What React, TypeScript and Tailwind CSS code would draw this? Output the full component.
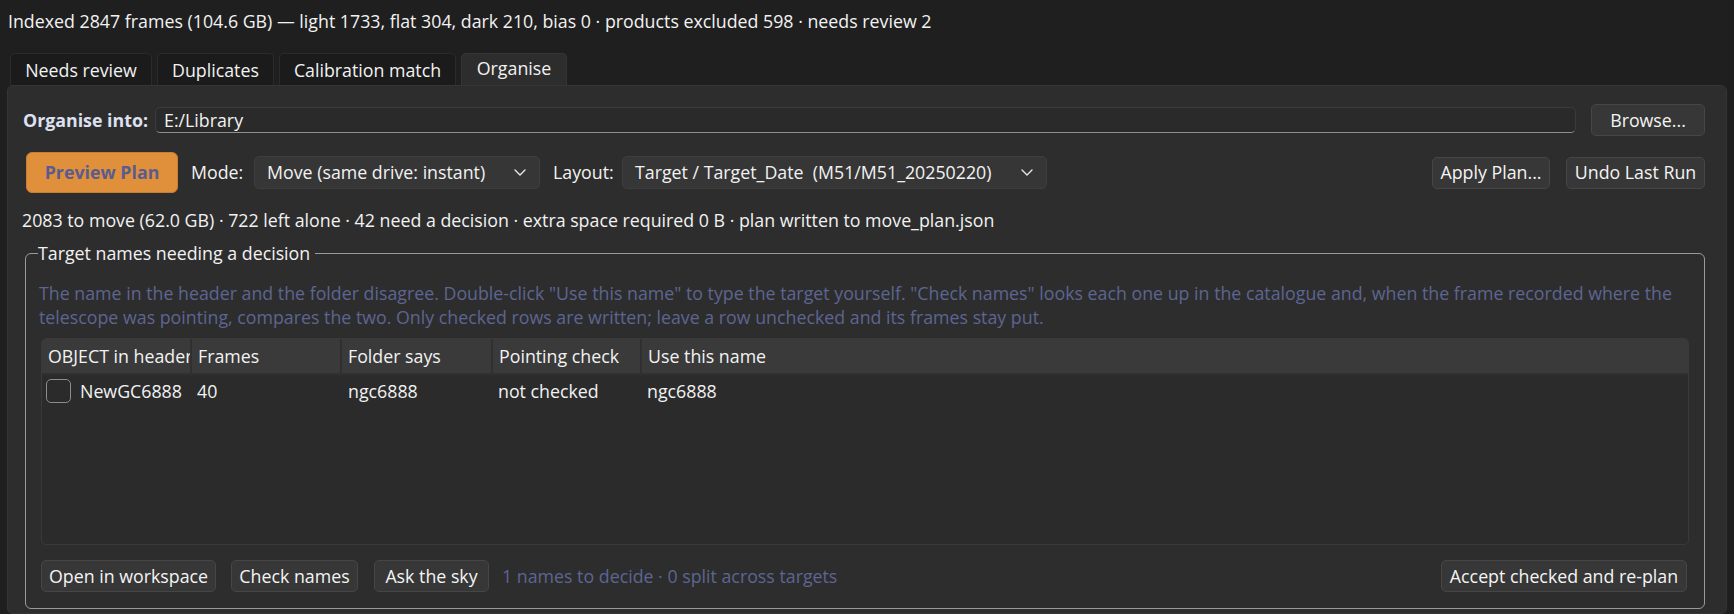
import React from 'react';

// Organise tab of the frame library window
const font = { fontFamily: '"Open Sans", "Noto Sans", sans-serif' };

function Chevron() {
  return (
    <svg width="12" height="7" viewBox="0 0 12 7" fill="none" className="shrink-0">
      <polyline points="1,1 6,6 11,1" stroke="#e8e8e8" strokeWidth="1.4" strokeLinecap="round" strokeLinejoin="round" />
    </svg>
  );
}

function Combo({ text, width }: { text: string; width: string }) {
  return (
    <div
      className={`${width} h-[33px] flex items-center justify-between pl-[12px] pr-[13px] rounded-[5px] bg-[#363636] border border-[#3e3e3e]`}
    >
      <span className="whitespace-pre text-[#f2f2f2]">{text}</span>
      <Chevron />
    </div>
  );
}

function Btn({ label, width }: { label: string; width: string }) {
  return (
    <button
      className={`${width} h-[32px] shrink-0 flex items-center justify-center rounded-[5px] bg-[#373737] border border-[#464646] text-[#f4f4f4] whitespace-nowrap`}
    >
      {label}
    </button>
  );
}

const tabs = ['Needs review', 'Duplicates', 'Calibration match', 'Organise'];
const tabWidths = ['w-[142px]', 'w-[117px]', 'w-[177px]', 'w-[106px]'];

const columns = ['OBJECT in header', 'Frames', 'Folder says', 'Pointing check', 'Use this name'];

export default function App() {
  return (
    <div className="w-full h-[614px] overflow-hidden bg-[#1f1f1f] text-[17.8px] text-[#f2f2f2] flex flex-col" style={font}>
      {/* Index summary */}
      <div className="h-[53px] shrink-0 pl-[8px] pt-[9px] leading-[24px] whitespace-nowrap">
        Indexed 2847 frames (104.6 GB) — light 1733, flat 304, dark 210, bias 0 · products excluded 598 · needs review 2
      </div>

      {/* Tabs */}
      <div className="flex pl-[10px] gap-[5px] h-[32px] shrink-0">
        {tabs.map((t, i) => {
          const active = t === 'Organise';
          return (
            <div
              key={t}
              className={`${tabWidths[i]} flex items-center justify-center rounded-t-[5px] border border-b-0 leading-[24px] ${
                active ? 'bg-[#2d2d2d] border-[#353535] pb-[3px]' : 'bg-[#1b1b1b] border-[#2b2b2b]'
              }`}
            >
              {t}
            </div>
          );
        })}
      </div>

      {/* Panel */}
      <div className="flex-1 mx-[7px] bg-[#2d2d2d] border border-[#353535] rounded-[6px] pl-[15px] pr-[21px] pt-[18px] flex flex-col">
        {/* Destination */}
        <div className="flex items-center h-[32px]">
          <span className="w-[132px] shrink-0 font-bold text-[#dde0f2] whitespace-nowrap">Organise into:</span>
          <div className="flex-1 h-[26px] flex items-center px-[8px] rounded-[5px] bg-[#2a2a2a] border border-[#3b3b3b] border-b-[#8e8e8e]">
            E:/Library
          </div>
          <div className="w-[15px] shrink-0" />
          <Btn label="Browse..." width="w-[114px]" />
        </div>

        {/* Plan controls */}
        <div className="flex items-center h-[41px] mt-[16px]">
          <button className="ml-[3px] w-[152px] h-[41px] shrink-0 rounded-[6px] bg-[#e08f3b] border border-[#c97e31] font-bold text-[#5a5c8f]">
            Preview Plan
          </button>
          <span className="ml-[13px] w-[63px] shrink-0">Mode:</span>
          <Combo text="Move (same drive: instant)" width="w-[286px]" />
          <span className="ml-[13px] w-[69px] shrink-0">Layout:</span>
          <Combo text="Target / Target_Date  (M51/M51_20250220)" width="w-[425px]" />
          <div className="flex-1" />
          <Btn label="Apply Plan..." width="w-[118px]" />
          <div className="w-[16px] shrink-0" />
          <Btn label="Undo Last Run" width="w-[139px]" />
        </div>

        <div className="mt-[15px] ml-[-1px] leading-[24px] whitespace-nowrap">
          2083 to move (62.0 GB) · 722 left alone · 42 need a decision · extra space required 0 B · plan written to move_plan.json
        </div>

        {/* Decisions group */}
        <fieldset className="mt-[9px] ml-[2px] mr-0 border border-[#9a9a9a] rounded-[6px] pl-[15px] pr-[15px] pt-[16px] pb-[16px]">
          <legend className="ml-[-3px] pr-[5px] leading-[24px]">Target names needing a decision</legend>

          <p className="ml-[-2px] leading-[24px] text-[#5d6592] whitespace-nowrap">
            The name in the header and the folder disagree. Double-click "Use this name" to type the target yourself. "Check names" looks each one up in the catalogue and, when the frame recorded where the
            <br />
            telescope was pointing, compares the two. Only checked rows are written; leave a row unchecked and its frames stay put.
          </p>

          {/* Table */}
          <div className="mt-[9px] h-[207px] rounded-[5px] border border-[#3a3a3a] bg-[#2b2b2b] overflow-hidden">
            <div className="grid grid-cols-[150px_150px_151px_149px_1fr] h-[36px] bg-[#3a3a3a] border-b-2 border-[#303030]">
              {columns.map((c, i) => (
                <div
                  key={c}
                  className={`flex items-center pl-[6px] overflow-hidden whitespace-nowrap ${
                    i < columns.length - 1 ? 'border-r-2 border-[#303030]' : ''
                  }`}
                >
                  {c}
                </div>
              ))}
            </div>
            <div className="grid grid-cols-[150px_150px_151px_149px_1fr] h-[32px] items-center">
              <div className="flex items-center pl-[4px] gap-[9px] whitespace-nowrap">
                <span className="w-[25px] h-[24px] shrink-0 rounded-[5px] border-[1.5px] border-[#8c8c8c] bg-[#2b2b2b]" />
                NewGC6888
              </div>
              <div className="pl-[5px]">40</div>
              <div className="pl-[6px]">ngc6888</div>
              <div className="pl-[5px]">not checked</div>
              <div className="pl-[5px]">ngc6888</div>
            </div>
          </div>

          {/* Actions */}
          <div className="mt-[15px] h-[32px] flex items-center">
            <Btn label="Open in workspace" width="w-[175px]" />
            <div className="w-[15px] shrink-0" />
            <Btn label="Check names" width="w-[127px]" />
            <div className="w-[16px] shrink-0" />
            <Btn label="Ask the sky" width="w-[115px]" />
            <span className="ml-[13px] text-[#5d6592] whitespace-nowrap">1 names to decide · 0 split across targets</span>
            <div className="flex-1" />
            <Btn label="Accept checked and re-plan" width="w-[246px]" />
            <div className="w-[2px] shrink-0" />
          </div>
        </fieldset>
      </div>
    </div>
  );
}
